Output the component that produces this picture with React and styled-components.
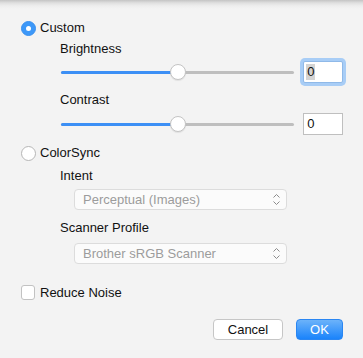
import React from 'react';
import styled, { createGlobalStyle } from 'styled-components';

const GlobalStyle = createGlobalStyle`
  html, body {
    margin: 0;
    padding: 0;
    background: #f3f3f3;
  }
  body {
    font-family: "Helvetica Neue", "Liberation Sans", Arial, sans-serif;
    font-size: 13px;
    color: #111;
  }
`;

const Sheet = styled.div`
  width: 363px;
  height: 358px;
  box-sizing: border-box;
  background: linear-gradient(to bottom, #c4c4c4 0px, #e0e0e0 3px, #eeeeee 6px, #f3f3f3 9px) no-repeat;
  background-color: #f3f3f3;
  padding: 20px 20px 0 21px;
  display: flex;
  flex-direction: column;
`;

const RadioRow = styled.label`
  display: flex;
  align-items: center;
  gap: 4px;
  height: 16px;
  margin-top: ${p => p.$top || 0}px;
  line-height: 16px;
`;

const RadioDot = styled.span`
  width: 15px;
  height: 15px;
  border-radius: 50%;
  box-sizing: border-box;
  flex: none;
  ${p => p.$on ? `
    background: #3d98f8;
    border: 1px solid #3990f0;
    display: flex;
    align-items: center;
    justify-content: center;
    &::after {
      content: '';
      width: 5px;
      height: 5px;
      border-radius: 50%;
      background: #fff;
    }
  ` : `
    background: #fff;
    border: 1px solid #b6b6b6;
  `}
`;

const SubLabel = styled.div`
  margin-left: 39px;
  margin-top: ${p => p.$top || 0}px;
  line-height: 16px;
  height: 16px;
`;

const SliderRow = styled.div`
  display: flex;
  align-items: center;
  margin-left: 40px;
  margin-top: ${p => p.$top || 0}px;
  height: 22px;
`;

const Track = styled.div`
  position: relative;
  width: 234px;
  height: 3px;
  border-radius: 2px;
  background: #bebebe;
  margin-right: 9px;
`;

const Fill = styled.div`
  height: 100%;
  border-radius: 2px;
  background: #3c8ff5;
`;

const Thumb = styled.div`
  position: absolute;
  top: 50%;
  width: 16px;
  height: 16px;
  margin: -8px 0 0 -8px;
  border-radius: 50%;
  background: #fff;
  border: 1px solid #c4c4c4;
  box-sizing: border-box;
  box-shadow: 0 1px 1px rgba(0, 0, 0, 0.08);
`;

const NumberField = styled.div`
  width: 40px;
  height: 22px;
  box-sizing: border-box;
  background: #fff;
  border: 1px solid ${p => (p.$focus ? '#8fb9e8' : '#bfbfbf')};
  box-shadow: ${p => (p.$focus ? '0 0 0 3px #a8cdf6' : 'none')};
  border-radius: ${p => (p.$focus ? '2px' : '0')};
  padding: 2px 0 0 2px;
  line-height: 16px;
  color: #111;
`;

const Selected = styled.span`
  display: inline-block;
  background: ${p => (p.$on ? '#d4d4d4' : 'transparent')};
  padding: 0 1px;
`;

const Select = styled.div`
  display: flex;
  align-items: center;
  justify-content: space-between;
  width: 213px;
  height: 21px;
  box-sizing: border-box;
  margin-left: 53px;
  margin-top: ${p => p.$top || 0}px;
  padding: 0 5px 0 8px;
  border: 1px solid #dcdcdc;
  border-radius: 4px;
  background: #fbfbfb;
  color: #9c9c9c;
  line-height: 19px;
`;

const CheckRow = styled.label`
  display: flex;
  align-items: center;
  gap: 5px;
  margin-top: ${p => p.$top || 0}px;
  height: 14px;
`;

const CheckBox = styled.span`
  width: 12px;
  height: 13px;
  border: 1px solid #c2c2c2;
  border-radius: 3px;
  background: #fff;
  flex: none;
`;

const Footer = styled.div`
  display: flex;
  justify-content: flex-end;
  gap: 13px;
  margin-top: 20px;
`;

const Button = styled.button`
  font: inherit;
  height: 21px;
  width: ${p => p.$w}px;
  box-sizing: border-box;
  border-radius: 4px;
  padding: 0;
  line-height: 19px;
  ${p => p.$primary ? `
    color: #fff;
    border: 1px solid #2a86f2;
    background: linear-gradient(to bottom, #6cb3fa, #1a83fb);
  ` : `
    color: #111;
    border: 1px solid #c6c6c6;
    background: #fff;
  `}
`;

const Chevrons = () => (
  <svg width="9" height="13" viewBox="0 0 9 13" fill="none" stroke="#8c8c8c" strokeWidth="1">
    <path d="M1.5 4.5 L4.5 1.5 L7.5 4.5" />
    <path d="M1.5 8.5 L4.5 11.5 L7.5 8.5" />
  </svg>
);

const Slider = ({ value, top, focus }) => (
  <SliderRow $top={top}>
    <Track>
      <Fill style={{ width: `${value}%` }} />
      <Thumb style={{ left: `${value}%` }} />
    </Track>
    <NumberField $focus={focus}>
      <Selected $on={focus}>0</Selected>
    </NumberField>
  </SliderRow>
);

export default function App() {
  return (
    <>
      <GlobalStyle />
      <Sheet>
        <RadioRow>
          <RadioDot $on />
          Custom
        </RadioRow>
        <SubLabel $top={5}>Brightness</SubLabel>
        <Slider value={50} top={4} focus />
        <SubLabel $top={9}>Contrast</SubLabel>
        <Slider value={50} top={5} />
        <RadioRow $top={10}>
          <RadioDot />
          ColorSync
        </RadioRow>
        <SubLabel $top={7}>Intent</SubLabel>
        <Select $top={5}>
          Perceptual (Images)
          <Chevrons />
        </Select>
        <SubLabel $top={10}>Scanner Profile</SubLabel>
        <Select $top={7}>
          Brother sRGB Scanner
          <Chevrons />
        </Select>
        <CheckRow $top={21}>
          <CheckBox />
          Reduce Noise
        </CheckRow>
        <Footer>
          <Button $w={70}>Cancel</Button>
          <Button $w={47} $primary>OK</Button>
        </Footer>
      </Sheet>
    </>
  );
}
